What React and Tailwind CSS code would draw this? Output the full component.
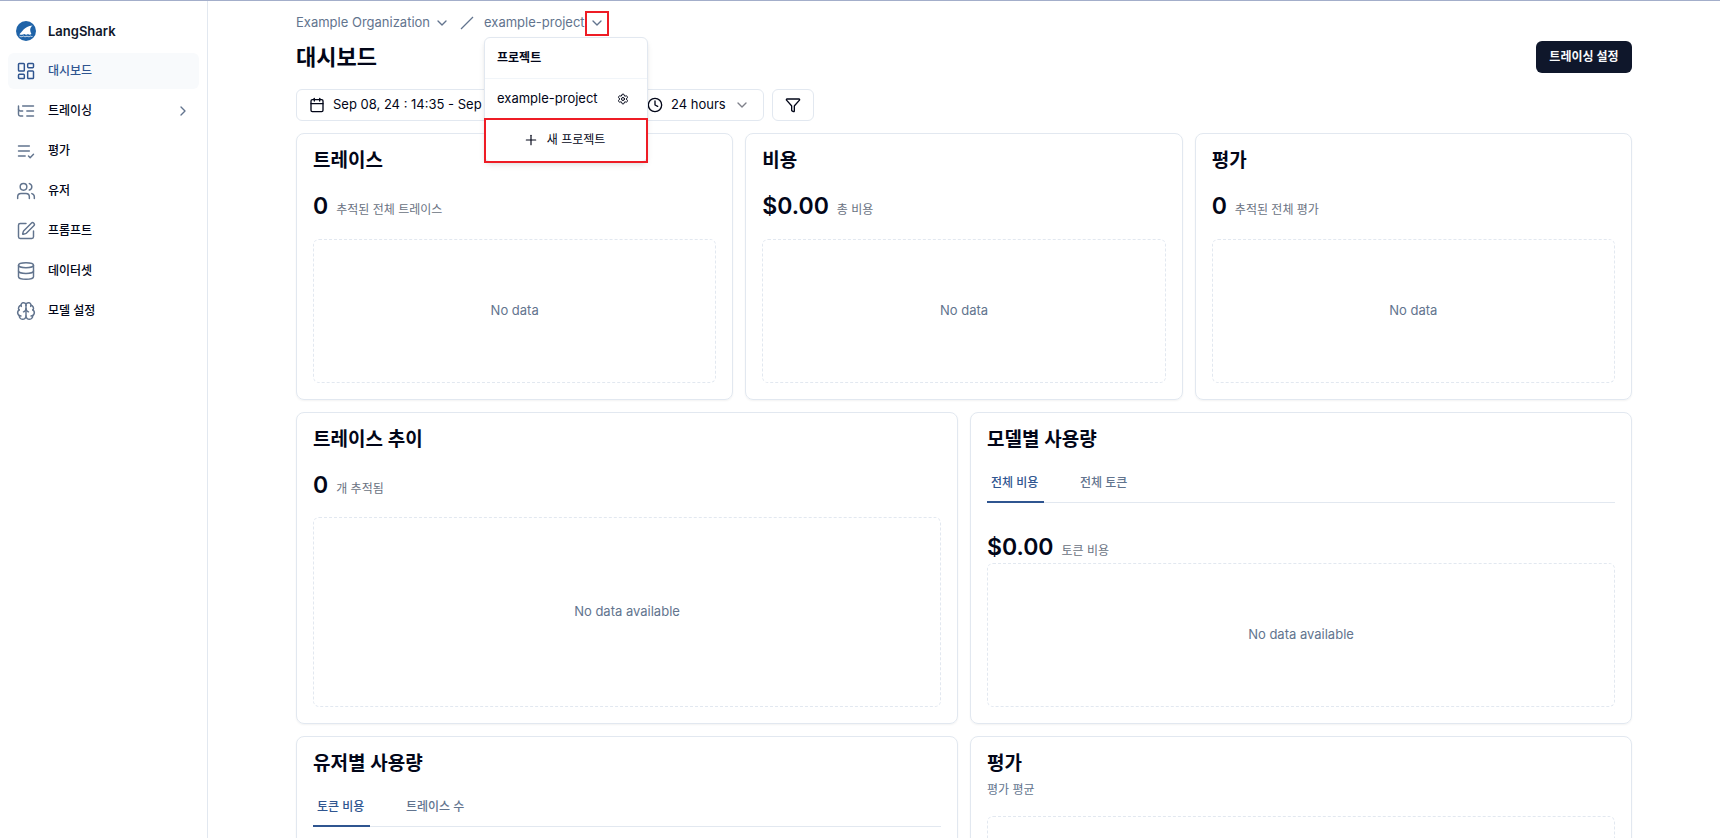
import {
  Brain,
  Calendar,
  ChevronDown,
  ChevronRight,
  Clock,
  Database,
  Filter,
  LayoutDashboard,
  Plus,
  Settings,
  SquarePen,
  Users,
} from "lucide-react";

function SharkLogo() {
  return (
    <svg viewBox="0 0 20 20" className="size-5 shrink-0" aria-hidden="true">
      <circle cx="10" cy="10" r="10" fill="#1f63a8" />
      <path d="M3.4 13.2C6 11.5 7.6 5.6 16.600 4.600c-2.600 1.800-3.200 4.600-1.200 8.400-1.200.9-2.400.9-3.400.1-1.200.9-2.500.9-3.600 0-1.600.9-3.400 1-5 .1z" fill="#fff" />
      <path d="M3.400 15.100c1.300.8 2.600.8 3.900 0 1.200.8 2.500.8 3.700 0 1.200.8 2.400.8 3.600 0 .7.4 1.300.5 1.900.3" fill="none" stroke="#fff" strokeWidth="0.8" />
    </svg>
  );
}

function LineIcon({ className, strokeWidth, children }) {
  return (
    <svg viewBox="0 0 24 24" className={className} fill="none" stroke="currentColor" strokeWidth={strokeWidth} strokeLinecap="round" strokeLinejoin="round" aria-hidden="true">
      {children}
    </svg>
  );
}

function ListCheckIcon(props) {
  return (
    <LineIcon {...props}>
      <path d="M16 6H3M16 12H3M11 18H3" />
      <path d="m15 18 2 2 4-4" />
    </LineIcon>
  );
}

function ListTreeIcon(props) {
  return (
    <LineIcon {...props}>
      <path d="M21 12h-8M21 6H8M21 18h-8" />
      <path d="M3 6v4c0 1.1.9 2 2 2h3" />
      <path d="M3 10v6c0 1.1.9 2 2 2h3" />
    </LineIcon>
  );
}

const navItems = [
  { label: "대시보드", icon: LayoutDashboard, active: true },
  { label: "트레이싱", icon: ListTreeIcon, expandable: true },
  { label: "평가", icon: ListCheckIcon },
  { label: "유저", icon: Users },
  { label: "프롬프트", icon: SquarePen },
  { label: "데이터셋", icon: Database },
  { label: "모델 설정", icon: Brain },
];

function Sidebar() {
  return (
    <aside className="w-52 shrink-0 border-r border-slate-200 px-2 pt-5">
      <a href="#" className="flex h-5 items-center gap-3 px-2 text-[13px] leading-4 font-semibold text-slate-900">
        <SharkLogo />
        LangShark
      </a>
      <nav className="mt-3 flex flex-col gap-1">
        {navItems.map(({ label, icon: Icon, active, expandable }) => (
          <a
            key={label}
            href="#"
            className={
              active
                ? "flex h-9 items-center gap-3 rounded-md bg-slate-50 px-2 text-[12px] font-medium text-[#2f5590]"
                : "flex h-9 items-center gap-3 rounded-md px-2 text-[12px] font-medium text-slate-950"
            }
          >
            <Icon className={active ? "size-5 shrink-0" : "size-5 shrink-0 text-slate-500"} strokeWidth={1.75} />
            <span className="flex-1">{label}</span>
            {expandable && <ChevronRight className="size-4 text-slate-500" />}
          </a>
        ))}
      </nav>
    </aside>
  );
}

function ProjectMenu() {
  return (
    <div className="absolute top-full left-0 z-10 mt-1 w-[164px] rounded-md border border-slate-200 bg-white text-slate-950 shadow-md">
      <div className="flex h-[41px] items-center border-b border-slate-100 px-3 text-[12px] font-semibold">프로젝트</div>
      <div className="flex h-10 items-center justify-between px-3">
        <a href="#" className="text-[13px]">example-project</a>
        <button type="button" aria-label="Project settings" className="mr-1.5">
          <Settings className="size-3" />
        </button>
      </div>
      <button type="button" className="-mx-px -mt-px -mb-0.5 flex h-[45px] w-[164px] items-center justify-center gap-2 border-2 border-[#ee1c25] pr-1 text-[12px]">
        <Plus className="size-4" strokeWidth={1.75} />
        새 프로젝트
      </button>
    </div>
  );
}

function Breadcrumb() {
  return (
    <div className="flex h-5 items-center gap-2 text-[13px] text-slate-500">
      <button type="button" className="flex items-center gap-1">
        Example Organization
        <ChevronDown className="size-4" />
      </button>
      <svg viewBox="0 0 18 16" className="h-4 w-[18px]" fill="none" stroke="currentColor" strokeWidth="1.2" aria-hidden="true">
        <path d="M3 14 15 2" />
      </svg>
      <div className="relative flex items-center">
        <a href="#">example-project</a>
        <button type="button" aria-label="Switch project" className="-my-1 flex h-[25px] w-6 items-center justify-center border-2 border-[#ee1c25]">
          <ChevronDown className="size-4" />
        </button>
        <ProjectMenu />
      </div>
    </div>
  );
}

function Card({ title, subtitle, children }) {
  return (
    <section className="flex flex-col rounded-lg border border-slate-200 p-4 shadow-xs">
      <h2 className="h-5 text-[19px] leading-[22px] font-semibold">{title}</h2>
      {subtitle && <p className="mt-2 text-[12px] leading-[18px] text-slate-500">{subtitle}</p>}
      {children}
    </section>
  );
}

function Metric({ value, label }) {
  return (
    <p className="flex h-8 items-baseline gap-2">
      <span className="text-[23px] leading-8 font-semibold">{value}</span>
      <span className="text-[12px] text-gray-500">{label}</span>
    </p>
  );
}

function Empty({ className, children }) {
  return (
    <div className={`flex flex-auto items-center justify-center rounded-md border border-dashed border-slate-200 text-[13px] text-slate-500 ${className}`}>
      {children}
    </div>
  );
}

function Tabs({ items }) {
  return (
    <div role="tablist" className="mt-4 flex h-[38px] items-stretch gap-8 border-b border-slate-200 text-[12px] font-medium">
      {items.map((item, i) => (
        <button
          key={item}
          type="button"
          role="tab"
          aria-selected={i === 0}
          className={i === 0 ? "-mb-px min-w-[57px] border-b-2 border-[#2f5590] px-1 text-left text-[#2f5590]" : "-mb-px min-w-[57px] border-b-2 border-transparent px-1 text-left text-slate-500"}
        >
          {item}
        </button>
      ))}
    </div>
  );
}

const summaries = [
  { title: "트레이스", value: "0", label: "추적된 전체 트레이스" },
  { title: "비용", value: "$0.00", label: "총 비용" },
  { title: "평가", value: "0", label: "추적된 전체 평가" },
];

export default function App() {
  return (
    <div className="flex h-screen overflow-hidden border-t border-[#a3aeca] bg-white font-[Inter,'Noto_Sans_CJK_KR',sans-serif] text-slate-950">
      <Sidebar />
      <main className="min-w-0 flex-1 overflow-y-auto [scrollbar-width:none]">
        <div className="mx-auto max-w-[1400px] px-8 pt-3 pb-8">
          <Breadcrumb />
          <header className="mt-2 flex h-8 items-center justify-between">
            <h1 className="text-[22px] leading-8 font-bold">대시보드</h1>
            <button type="button" className="h-8 min-w-24 rounded-md bg-slate-900 px-3 text-[12px] font-semibold text-slate-50">트레이싱 설정</button>
          </header>

          <div className="mt-4 flex h-8 gap-2">
            <button type="button" className="flex w-[330px] items-center gap-2 rounded-md border border-slate-200 px-3 text-[13px] whitespace-nowrap">
              <Calendar className="size-4" />
              Sep 08, 24 : 14:35 - Sep 09, 24 : 14:35
            </button>
            <button type="button" className="flex w-[130px] items-center gap-2 rounded-md border border-slate-200 px-3 text-[13px] whitespace-nowrap">
              <Clock className="size-4 shrink-0" />
              24 hours
              <ChevronDown className="size-4 shrink-0 opacity-50" />
            </button>
            <button type="button" aria-label="Filter" className="flex w-[42px] items-center justify-center rounded-md border border-slate-200">
              <Filter className="size-4" />
            </button>
          </div>

          <div className="mt-3 grid grid-cols-3 gap-3">
            {summaries.map(({ title, value, label }) => (
              <Card key={title} title={title}>
                <div className="mt-5 mb-[17px]">
                  <Metric value={value} label={label} />
                </div>
                <Empty className="min-h-36">No data</Empty>
              </Card>
            ))}
          </div>

          <div className="mt-3 grid grid-cols-2 gap-3">
            <Card title="트레이스 추이">
              <div className="mt-5 mb-4">
                <Metric value="0" label="개 추적됨" />
              </div>
              <Empty className="min-h-[190px]">No data available</Empty>
            </Card>
            <Card title="모델별 사용량">
              <Tabs items={["전체 비용", "전체 토큰"]} />
              <div className="mt-7">
                <Metric value="$0.00" label="토큰 비용" />
              </div>
              <Empty className="min-h-36">No data available</Empty>
            </Card>
            <Card title="유저별 사용량">
              <Tabs items={["토큰 비용", "트레이스 수"]} />
              <div className="mt-7">
                <Metric value="$0.00" label="전체 비용" />
              </div>
              <Empty className="min-h-36">No data available</Empty>
            </Card>
            <Card title="평가" subtitle="평가 평균">
              <Empty className="mt-[17px] min-h-36">No data available</Empty>
            </Card>
          </div>
        </div>
      </main>
    </div>
  );
}
